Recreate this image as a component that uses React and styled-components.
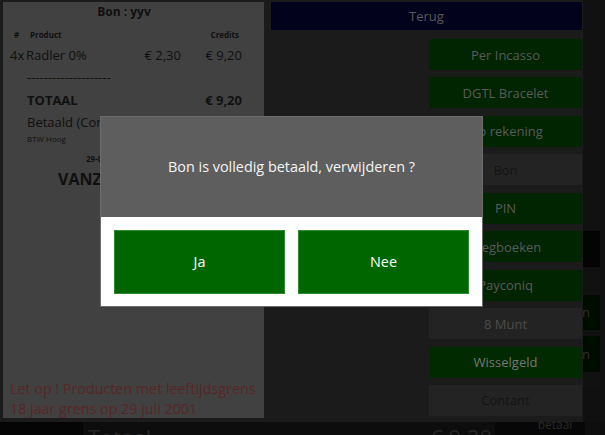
import React from "react";
import styled, { createGlobalStyle } from "styled-components";

const colors = {
  page: "#0e0e0e",
  panel: "#1b1b1b",
  receipt: "#414141",
  ink: "#101010",
  warning: "#582626",
  navy: "#02021c",
  green: "#012401",
  greenLit: "#012a01",
  grey: "#232323",
  label: "#5a5a5a",
  dialogTop: "#5e5e5e",
  dialogGreen: "#006700",
};

const font = `"Open Sans", "Noto Sans", sans-serif`;

const GlobalStyle = createGlobalStyle`
  html, body {
    margin: 0;
    padding: 0;
    background: ${colors.page};
  }
  body {
    font-family: ${font};
  }
  * {
    box-sizing: border-box;
  }
`;

/* ---------- base page (behind the payment panel) ---------- */

const Page = styled.div`
  position: relative;
  width: 605px;
  height: 435px;
  overflow: hidden;
  display: flex;
  flex-direction: column;
  background: ${colors.page};
`;

const BaseMain = styled.div`
  height: 422px;
  flex-shrink: 0;
  display: flex;
  justify-content: flex-end;
  padding-right: 5px;
  background: #111111;
`;

const SideColumn = styled.div`
  width: 60px;
  display: flex;
  flex-direction: column;
`;

const SideButton = styled.div`
  margin-top: ${(p) => p.$top}px;
  height: ${(p) => p.$h}px;
  background: ${(p) => p.$bg};
  color: #2e2e2e;
  font-size: 13px;
  display: flex;
  align-items: center;
  justify-content: flex-end;
  padding-right: 10px;
`;

const BottomBar = styled.div`
  display: flex;
  height: 40px;
  flex-shrink: 0;
`;

const BarStub = styled.div`
  width: 83px;
  background: #050505;
`;

const TotalBox = styled.div`
  width: 412px;
  display: flex;
  justify-content: space-between;
  padding: 0 3px 0 5px;
  background: #0d0d0d;
  color: #262626;
  font-size: 22px;
  line-height: 30px;
`;

const PayBox = styled.div`
  width: 90px;
  background: #070707;
  color: #2a2a2a;
  font-size: 12px;
  line-height: 6px;
  text-align: center;
  padding-left: 30px;
`;

/* ---------- payment panel ---------- */

const Panel = styled.div`
  position: absolute;
  top: 0;
  left: 0;
  width: 583px;
  height: 422px;
  display: flex;
  padding: 2px 1px 4px 3px;
  background: ${colors.panel};
`;

const Receipt = styled.div`
  width: 261px;
  display: flex;
  flex-direction: column;
  padding: 0 22px 0 7px;
  background: ${colors.receipt};
  color: ${colors.ink};
`;

const ReceiptTitle = styled.div`
  font-size: 12px;
  font-weight: 700;
  line-height: 20px;
  text-align: center;
  padding-right: 4px;
`;

const Row = styled.div`
  display: grid;
  grid-template-columns: 16px 1fr 60px 61px;
  align-items: center;
  margin-top: ${(p) => p.$top || 0}px;
  font-size: ${(p) => (p.$small ? 8 : 13)}px;
  font-weight: ${(p) => (p.$bold ? 700 : 400)};
  line-height: ${(p) => (p.$small ? 12 : 18)}px;
`;

const Cell = styled.span`
  text-align: ${(p) => (p.$right ? "right" : "left")};
  padding: ${(p) => p.$pad || "0"};
  white-space: nowrap;
`;

const Line = styled.div`
  margin: ${(p) => p.$top || 0}px 0 0 ${(p) => p.$left || 17}px;
  font-size: ${(p) => p.$size || 13}px;
  font-weight: ${(p) => (p.$bold ? 700 : 400)};
  line-height: ${(p) => p.$lh || 18}px;
  white-space: nowrap;
`;

const Warning = styled.div`
  margin-top: auto;
  margin-bottom: -1px;
  color: ${colors.warning};
  font-size: 14.3px;
  line-height: 20px;
  white-space: nowrap;
`;

const Actions = styled.div`
  flex: 1;
  display: flex;
  flex-direction: column;
  padding-left: 7px;
`;

const PayButton = styled.div`
  height: ${(p) => (p.$wide ? 28 : 31)}px;
  flex-shrink: 0;
  display: flex;
  align-items: center;
  justify-content: center;
  background: ${(p) => p.$bg};
  color: ${(p) => p.$fg || colors.label};
  font-size: 13px;
`;

const ButtonColumn = styled.div`
  align-self: flex-end;
  width: 153px;
  margin-top: 9px;
  display: flex;
  flex-direction: column;
  gap: 7.45px;
`;

/* ---------- confirm dialog ---------- */

const Backdrop = styled.div`
  position: absolute;
  inset: 0;
  display: flex;
  align-items: center;
  justify-content: center;
`;

const Dialog = styled.div`
  width: 381px;
  display: flex;
  flex-direction: column;
  box-shadow: 0 0 0 1px #6c6c6c;
`;

const DialogMessage = styled.div`
  height: 100px;
  display: flex;
  align-items: center;
  justify-content: center;
  background: ${colors.dialogTop};
  color: #f4f4f4;
  font-size: 14.4px;
`;

const DialogButtons = styled.div`
  display: flex;
  gap: 13px;
  padding: 13px 13px 12px;
  background: #ffffff;
`;

const DialogButton = styled.button`
  flex: 1;
  height: 64px;
  border: 1px solid #2d8a2d;
  background: ${colors.dialogGreen};
  color: #ffffff;
  font-family: ${font};
  font-size: 14.4px;
  padding: 0;
  cursor: pointer;
`;

const payOptions = [
  { label: "Per Incasso", bg: colors.green },
  { label: "DGTL Bracelet", bg: colors.green },
  { label: "Op rekening", bg: colors.green },
  { label: "Bon", bg: colors.grey, fg: "#131313" },
  { label: "PIN", bg: colors.green },
  { label: "Wegboeken", bg: colors.green },
  { label: "Payconiq", bg: colors.green },
  { label: "8 Munt", bg: colors.grey, fg: "#4c4c4c" },
  { label: "Wisselgeld", bg: colors.greenLit, fg: "#767676" },
  { label: "Contant", bg: colors.grey, fg: "#131313" },
];

const App = () => {
  return (
    <Page>
      <GlobalStyle />

      <BaseMain>
        <SideColumn>
          <SideButton $top={231} $h={40} $bg="#040404" />
          <SideButton $top={28} $h={40} $bg="#010c01">Open</SideButton>
          <SideButton $top={6} $h={40} $bg="#010c01">Delen</SideButton>
          <SideButton $top={15} $h={40} $bg="#101010" />
        </SideColumn>
      </BaseMain>
      <BottomBar>
        <BarStub />
        <TotalBox>
          <span>Totaal</span>
          <span>€ 9,20</span>
        </TotalBox>
        <PayBox>betaal</PayBox>
      </BottomBar>

      <Panel>
        <Receipt>
          <ReceiptTitle>Bon : yyv</ReceiptTitle>
          <Row $small $bold $top={7}>
            <Cell $pad="0 0 0 4px">#</Cell>
            <Cell $pad="0 0 0 4px">Product</Cell>
            <Cell />
            <Cell $right $pad="0 3px 0 0">Credits</Cell>
          </Row>
          <Row $top={5}>
            <Cell>4x</Cell>
            <Cell>Radler 0%</Cell>
            <Cell $right>€ 2,30</Cell>
            <Cell $right>€ 9,20</Cell>
          </Row>
          <Line $top={4}>--------------------</Line>
          <Row $bold $top={5}>
            <Cell />
            <Cell $pad="0 0 0 1px">TOTAAL</Cell>
            <Cell />
            <Cell $right>€ 9,20</Cell>
          </Row>
          <Line $top={4}>Betaald (Contant)</Line>
          <Line $top={2} $size={8} $lh={12}>
            BTW Hoog
          </Line>
          <Line $top={8} $size={8} $lh={12} $bold $left={76}>
            29-07-2019 14:32
          </Line>
          <Line $top={4} $size={16} $lh={20} $bold $left={48}>
            VANZANDVOORT
          </Line>
          <Warning>
            Let op ! Producten met leeftijdsgrens
            <br />
            18 jaar grens op 29 juli 2001
          </Warning>
        </Receipt>

        <Actions>
          <PayButton $wide $bg={colors.navy}>
            Terug
          </PayButton>
          <ButtonColumn>
            {payOptions.map((o) => (
              <PayButton key={o.label} $bg={o.bg} $fg={o.fg}>
                {o.label}
              </PayButton>
            ))}
          </ButtonColumn>
        </Actions>

        <Backdrop>
          <Dialog>
            <DialogMessage>Bon is volledig betaald, verwijderen ?</DialogMessage>
            <DialogButtons>
              <DialogButton>Ja</DialogButton>
              <DialogButton>Nee</DialogButton>
            </DialogButtons>
          </Dialog>
        </Backdrop>
      </Panel>
    </Page>
  );
};

export default App;
